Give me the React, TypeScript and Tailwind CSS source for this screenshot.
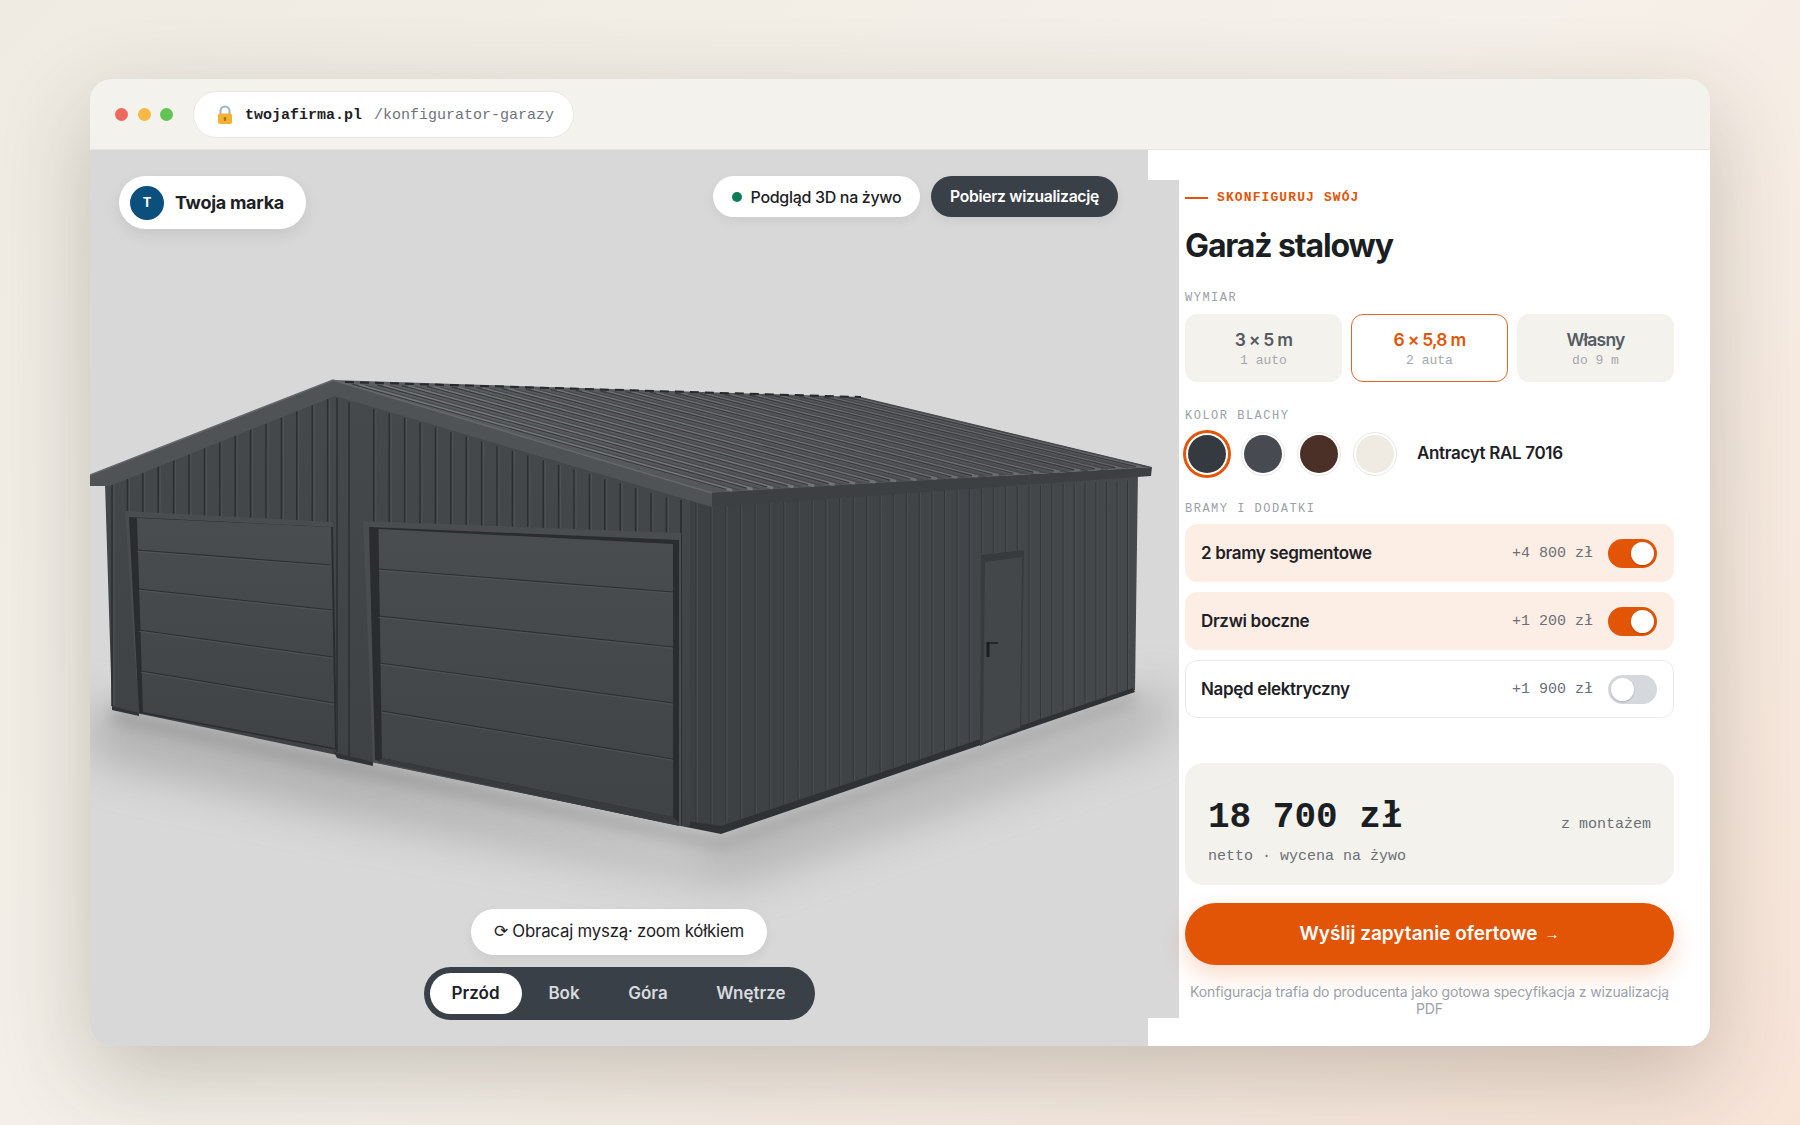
import React from 'react'

const mono = "font-['Liberation_Mono','DejaVu_Sans_Mono',monospace]"
const sans = "font-['Inter','Liberation_Sans',sans-serif]"

function lerp(a: number, b: number, t: number) {
  return a + (b - a) * t
}

function Garage() {
  // roof seams run from the ridge down to the eave
  const roofRibs = Array.from({ length: 21 }, (_, i) => {
    const t = (i + 0.5) / 21
    return {
      x1: lerp(340, 861, t),
      y1: lerp(384, 398, t),
      x2: lerp(716, 1146, t),
      y2: lerp(490, 466, t),
    }
  })

  const gableRibs: { x: number; y1: number; y2: number }[] = []
  for (let x = 112; x < 680; x += 15.4) {
    if (x > 333 && x < 366) continue
    let y1 = 0
    let y2 = 0
    if (x < 335) {
      y1 = 485 - ((x - 105) * 88) / 228
      y2 = x < 127 ? 706 : 512 + ((x - 127) * 11) / 206
    } else {
      y1 = 397 + ((x - 335) * 105) / 346
      y2 = 522 + ((x - 365) * 13) / 314
    }
    gableRibs.push({ x, y1, y2 })
  }

  const sideRibs: { x: number; y1: number; y2: number }[] = []
  let sx = 696
  let step = 15
  while (sx < 1134) {
    if (sx < 978 || sx > 1024) {
      sideRibs.push({
        x: sx,
        y1: lerp(504, 480, (sx - 681) / 457),
        y2: sx < 721 ? 824 : lerp(825, 688, (sx - 721) / 412),
      })
    } else {
      sideRibs.push({ x: sx, y1: lerp(504, 480, (sx - 681) / 457), y2: 553 })
    }
    sx += step
    step = Math.max(8.5, step - 0.14)
  }

  const door1 = [
    [137, 550, 331, 565],
    [139, 589, 332, 610],
    [139, 630, 333, 657],
    [141, 671, 334, 703],
  ]
  const door2 = [
    [378.5, 569, 673, 592],
    [378.5, 616, 673, 647],
    [380, 663, 673, 703],
    [382, 711, 673, 759],
  ]

  return (
    <svg viewBox="90 180 1089 837" className="absolute left-0 top-[30px] h-[837px] w-[1089px]">
      <defs>
        <filter id="blur-lg" x="-30%" y="-30%" width="160%" height="160%">
          <feGaussianBlur stdDeviation="24" />
        </filter>
        <filter id="blur-sm" x="-30%" y="-30%" width="160%" height="160%">
          <feGaussianBlur stdDeviation="8" />
        </filter>
        <linearGradient id="side" x1="0" y1="0" x2="1" y2="0">
          <stop offset="0" stopColor="#3d4043" />
          <stop offset="1" stopColor="#46494c" />
        </linearGradient>
        <linearGradient id="front" x1="0" y1="0" x2="0" y2="1">
          <stop offset="0" stopColor="#46494c" />
          <stop offset="1" stopColor="#3e4144" />
        </linearGradient>
        <linearGradient id="panel" x1="0" y1="0" x2="0" y2="1">
          <stop offset="0" stopColor="#4a4d50" />
          <stop offset="1" stopColor="#404346" />
        </linearGradient>
        <linearGradient id="roof" x1="0" y1="0" x2="1" y2="0">
          <stop offset="0" stopColor="#5c5f62" />
          <stop offset="1" stopColor="#4b4d50" />
        </linearGradient>
      </defs>

      {/* floor shadows */}
      <polygon points="90,705 340,760 690,850 1170,690 1165,730 730,880 340,810 90,755" fill="#858585" opacity="0.55" filter="url(#blur-lg)" />
      <polygon points="112,708 337,755 681,828 721,838 1135,692 1135,702 721,848 337,772 112,722" fill="#777" opacity="0.5" filter="url(#blur-sm)" />

      {/* side wall */}
      <polygon points="681,490 1138,470 1135,690 721,832 681,824" fill="url(#side)" />
      {sideRibs.map((r, i) => (
        <g key={i}>
          <line x1={r.x} y1={r.y1} x2={r.x} y2={r.y2} stroke="#323538" strokeWidth="1" />
          <line x1={r.x + 1.2} y1={r.y1} x2={r.x + 1.2} y2={r.y2} stroke="#4c4f52" strokeWidth="1" />
        </g>
      ))}
      <polygon points="681,820 721,826 1133,688 1135,692 721,834 681,826" fill="#2f3235" />

      {/* side door */}
      <polygon points="981,555 1024,550 1021,728 980,746" fill="#383b3e" />
      <polygon points="985,562 1022,557 1020,727 983,742" fill="#44474a" />
      <path d="M988 643 H998" stroke="#1b1d1f" strokeWidth="1.5" fill="none" />
      <path d="M988 642 V657" stroke="#1b1d1f" strokeWidth="3" fill="none" />

      {/* front wall */}
      <polygon points="105,483 335,385 690,490 690,826 681,826 337,755 112,708" fill="url(#front)" />
      {gableRibs.map((r, i) => (
        <g key={i}>
          <line x1={r.x} y1={r.y1} x2={r.x} y2={r.y2} stroke="#2c2e31" strokeWidth="1.5" />
          <line x1={r.x + 2} y1={r.y1} x2={r.x + 2} y2={r.y2} stroke="#505356" strokeWidth="1" />
        </g>
      ))}
      <line x1="337" y1="398" x2="337" y2="752" stroke="#2d2f32" strokeWidth="1.5" />
      <line x1="349" y1="402" x2="349" y2="756" stroke="#2d2f32" strokeWidth="1.5" />
      <line x1="681" y1="500" x2="681" y2="826" stroke="#2d2f32" strokeWidth="2" />

      {/* garage doors */}
      <polygon points="125,511 333,522 337,750 139,713" fill="#4a4d50" />
      <polygon points="129,517 333,527 337,750 139,713" fill="#2a2c2f" />
      <polygon points="137,518 331,527 335,748 143,712" fill="url(#panel)" />
      {door1.map((l, i) => (
        <g key={i}>
          <line x1={l[0]} y1={l[1]} x2={l[2]} y2={l[3]} stroke="#2e2f32" strokeWidth="1.2" />
          <line x1={l[0]} y1={l[1] + 1.3} x2={l[2]} y2={l[3] + 1.3} stroke="#55585b" strokeWidth="0.7" />
        </g>
      ))}
      <polygon points="363,521 681,533 681,826 373,762" fill="#4a4d50" />
      <polygon points="369,527 679,540 679,823 375,760" fill="#2a2c2f" />
      <polygon points="378.5,529 673,544 673,817 382,758" fill="url(#panel)" />
      {door2.map((l, i) => (
        <g key={i}>
          <line x1={l[0]} y1={l[1]} x2={l[2]} y2={l[3]} stroke="#2e2f32" strokeWidth="1.2" />
          <line x1={l[0]} y1={l[1] + 1.3} x2={l[2]} y2={l[3] + 1.3} stroke="#55585b" strokeWidth="0.7" />
        </g>
      ))}
      <polygon points="333,750 337,753 373,762 373,766 337,758" fill="#313437" />
      <polygon points="112,706 139,713 139,716 112,710" fill="#313437" />
      <polygon points="382,758 673,817 679,823 679,826 378,762" fill="#383b3e" />

      {/* roof */}
      <polygon points="333,380 861,397 1152,467 712,493" fill="url(#roof)" />
      {roofRibs.map((r, i) => (
        <g key={i}>
          <line x1={r.x1 + 6} y1={r.y1 + 1} x2={r.x2 + 6} y2={r.y2 + 1} stroke="#75787b" strokeWidth="3" opacity={1 - i / 50} />
          <line x1={r.x1 + 13} y1={r.y1 + 0.5} x2={r.x2 + 13} y2={r.y2 + 0.5} stroke="#45474a" strokeWidth="1" />
          <line x1={r.x1} y1={r.y1} x2={r.x2} y2={r.y2} stroke="#393c3f" strokeWidth="1.4" />
        </g>
      ))}
      <line x1="345" y1="382" x2="861" y2="397" stroke="#26282a" strokeWidth="2" strokeDasharray="9 6" />
      <polygon points="712,493 1152,467 1151,476 712,507" fill="#3d4043" />
      <polygon points="333,380 712,493 712,507 335,396 110,486 90,486 90,475" fill="#505356" />
      <polyline points="90,475 333,380 712,493" fill="none" stroke="#65686b" strokeWidth="1.5" />
    </svg>
  )
}

function LockIcon() {
  return (
    <svg width="18" height="20" viewBox="0 0 18 20">
      <path d="M4.5 9 V6 a4.5 4.5 0 0 1 9 0 V9" fill="none" stroke="#9fb4bf" strokeWidth="2" />
      <rect x="2" y="8.5" width="14" height="10.5" rx="2" fill="#f2b132" />
      <rect x="7.8" y="12" width="2.4" height="4" rx="1" fill="#a8741a" />
    </svg>
  )
}

function SizeOption({ title, sub, active }: { title: string; sub: string; active?: boolean }) {
  return (
    <button
      className={`flex h-[68px] flex-col items-center justify-center rounded-xl border-[1.5px] pt-[2px] ${
        active ? 'border-[#e0672c] bg-white text-[#e25507]' : 'border-[#f4f2ed] bg-[#f4f2ed] text-[#555b63]'
      }`}
    >
      <span className="text-[17.5px] font-semibold leading-[24px] tracking-[-0.045em]">{title}</span>
      <span className={`${mono} text-[13px] leading-[18px] text-[#a3a8ae]`}>{sub}</span>
    </button>
  )
}

function Swatch({ color, active }: { color: string; active?: boolean }) {
  return (
    <span
      className={`flex h-[44px] w-[44px] items-center justify-center rounded-full border-[1.5px] bg-white ${
        active ? 'border-[#e25507] shadow-[0_0_0_2px_#e25507]' : 'border-[#e9e7e2]'
      }`}
    >
      <span className={`block h-[38px] w-[38px] rounded-full ${color}`} />
    </span>
  )
}

function AddonRow({ label, price, on }: { label: string; price: string; on?: boolean }) {
  return (
    <div
      className={`flex h-[58px] items-center rounded-xl border-[1.5px] pl-[15px] pr-[16px] ${
        on ? 'border-[#fdeee5] bg-[#fdeee5]' : 'border-[#eceae6] bg-white'
      }`}
    >
      <span className="flex-1 pt-[2px] text-[17px] font-semibold tracking-[-0.02em] text-[#1d2125]">{label}</span>
      <span className={`${mono} mr-[15px] pt-[2px] text-[15px] text-[#6b7076]`}>{price}</span>
      <span
        className={`flex h-[29px] w-[49px] items-center rounded-full px-[3px] ${
          on ? 'justify-end bg-[#e25507]' : 'justify-start bg-[#d5d8dc]'
        }`}
      >
        <span className="block h-[23px] w-[23px] rounded-full bg-white shadow-[0_1px_2px_rgba(0,0,0,0.2)]" />
      </span>
    </div>
  )
}

function Label({ children }: { children: React.ReactNode }) {
  return <div className={`${mono} text-[12px] leading-[16px] tracking-[0.125em] text-[#9aa0a6]`}>{children}</div>
}

export default function App() {
  return (
    <div
      className={`${sans} h-[1125px] overflow-hidden bg-[linear-gradient(135deg,#efebe2_0%,#f5f1ea_50%,#f8e4d7_100%)] px-[90px] pt-[79px]`}
    >
      <div className="flex h-[967px] w-[1620px] flex-col overflow-hidden rounded-[22px] shadow-[0_30px_90px_rgba(50,40,25,0.24)]">
        {/* browser bar */}
        <div className="flex h-[71px] shrink-0 items-center border-b border-[#e6e4de] bg-[#f4f2ed] pl-[25px]">
          <div className="flex gap-[9.5px]">
            <span className="h-[13px] w-[13px] rounded-full bg-[#ee6a5f]" />
            <span className="h-[13px] w-[13px] rounded-full bg-[#f5b945]" />
            <span className="h-[13px] w-[13px] rounded-full bg-[#61c454]" />
          </div>
          <div className="ml-[20px] flex h-[47px] w-[381px] items-center rounded-full border border-[#e9e7e2] bg-white pl-[22px] pt-[2px]">
            <LockIcon />
            <span className={`${mono} ml-[11px] pt-[2px] text-[15px] font-bold text-[#1d2125]`}>twojafirma.pl</span>
            <span className={`${mono} ml-[12px] pt-[2px] text-[15px] text-[#6f747a]`}>/konfigurator-garazy</span>
          </div>
        </div>

        <div className="flex min-h-0 flex-1">
          {/* stage */}
          <div className="relative z-10 w-[1058px] shrink-0 bg-[#d8d8d8]">
            <Garage />
            <div className="absolute left-[29px] top-[26px] flex h-[53px] w-[187px] items-center gap-[11px] rounded-full bg-white pl-[11px] shadow-[0_6px_16px_rgba(0,0,0,0.08)]">
              <span className="flex h-[34px] w-[34px] items-center justify-center rounded-full bg-[#0b4f7d] text-[13px] font-bold text-white">T</span>
              <span className="text-[18px] font-bold tracking-[-0.015em] text-[#1d2125]">Twoja marka</span>
            </div>
            <div className="absolute right-[30px] top-[26px] flex gap-[11px]">
              <div className="flex h-[41px] w-[207px] items-center justify-center gap-[9px] rounded-full bg-white text-[16px] font-medium tracking-[-0.02em] text-[#1d2125] shadow-[0_4px_12px_rgba(0,0,0,0.06)]">
                <span className="h-[10px] w-[10px] rounded-full bg-[#0f7d57]" />
                Podgląd 3D na żywo
              </div>
              <button className="flex h-[41px] w-[187px] items-center justify-center rounded-full bg-[#3a4047] text-[15.7px] font-semibold tracking-[-0.02em] text-white shadow-[0_4px_12px_rgba(0,0,0,0.06)]">
                Pobierz wizualizację
              </button>
            </div>
            <div className="absolute bottom-[26px] left-0 right-0 flex flex-col items-center gap-[12px]">
              <div className="flex h-[46px] w-[296px] items-center justify-center rounded-full bg-white text-[16.8px] tracking-[-0.012em] text-[#1d2125] shadow-[0_4px_12px_rgba(0,0,0,0.06)]">
                ⟳ Obracaj myszą· zoom kółkiem
              </div>
              <div className="flex h-[53px] w-[391px] items-center gap-[4px] rounded-full bg-[#3a4047] p-[6px] text-[17px] font-semibold">
                <span className="flex h-[41px] w-[92px] items-center justify-center rounded-full bg-white text-[#1d2125]">Przód</span>
                <span className="flex w-[77px] justify-center text-[#d7dade]">Bok</span>
                <span className="flex w-[83px] justify-center text-[#d7dade]">Góra</span>
                <span className="flex w-[115px] justify-center text-[#d7dade]">Wnętrze</span>
              </div>
            </div>
          </div>

          {/* config panel */}
          <div className="flex min-w-0 flex-1 bg-white">
            <div className="mb-[28px] mt-[30px] w-[31px] shrink-0 bg-[#d8d8d8]" />
            <div className="ml-[6px] w-[489px] pt-[39px]">
              <div className="flex h-[18px] items-center gap-[9px]">
                <span className="h-[2.5px] w-[23px] bg-[#e25507]" />
                <span className={`${mono} text-[13px] font-bold tracking-[0.085em] text-[#e25507]`}>SKONFIGURUJ SWÓJ</span>
              </div>
              <h1 className="mt-[17px] text-[32px] font-bold leading-[44px] tracking-[-0.035em] text-[#1b1f23]">Garaż stalowy</h1>
              <div className="mt-[22px]">
                <Label>WYMIAR</Label>
              </div>
              <div className="mt-[8px] grid grid-cols-3 gap-[9px]">
                <SizeOption title="3 × 5 m" sub="1 auto" />
                <SizeOption title="6 × 5,8 m" sub="2 auta" active />
                <SizeOption title="Własny" sub="do 9 m" />
              </div>
              <div className="mt-[26px]">
                <Label>KOLOR BLACHY</Label>
              </div>
              <div className="mt-[6px] flex h-[48px] items-center gap-[12px]">
                <Swatch color="bg-[#343a40]" active />
                <Swatch color="bg-[#474a50]" />
                <Swatch color="bg-[#4a3027]" />
                <Swatch color="bg-[#efebe2]" />
                <span className="ml-[8px] text-[17px] font-semibold tracking-[-0.02em] text-[#1d2125]">Antracyt RAL 7016</span>
              </div>
              <div className="mt-[23px]">
                <Label>BRAMY I DODATKI</Label>
              </div>
              <div className="mt-[7px] flex flex-col gap-[10px]">
                <AddonRow label="2 bramy segmentowe" price="+4 800 zł" on />
                <AddonRow label="Drzwi boczne" price="+1 200 zł" on />
                <AddonRow label="Napęd elektryczny" price="+1 900 zł" />
              </div>
              <div className="mt-[45px] h-[122px] rounded-[18px] bg-[#f4f2ed] px-[23px] pt-[31px]">
                <div className="flex items-end justify-between">
                  <span className={`${mono} text-[36px] font-bold leading-[48px] text-[#1b1f23]`}>18 700 zł</span>
                  <span className={`${mono} pb-[7px] text-[15px] leading-[20px] text-[#6b7076]`}>z montażem</span>
                </div>
                <div className={`${mono} mt-[5px] text-[15px] leading-[20px] text-[#6b7076]`}>netto · wycena na żywo</div>
              </div>
              <button className="mt-[18px] flex h-[62px] w-full items-center justify-center gap-[7px] rounded-full bg-[#e25507] pt-[1px] text-[19px] font-semibold text-white shadow-[0_10px_24px_rgba(226,85,7,0.22)]">
                Wyślij zapytanie ofertowe
                <span className="font-['Liberation_Sans',sans-serif] text-[15px] font-normal">→</span>
              </button>
              <p className="mt-[18px] text-center text-[14px] leading-[17px] tracking-[-0.01em] text-[#9ca1a8]">
                Konfiguracja trafia do producenta jako gotowa specyfikacja z wizualizacją PDF
              </p>
            </div>
          </div>
        </div>
      </div>
    </div>
  )
}
